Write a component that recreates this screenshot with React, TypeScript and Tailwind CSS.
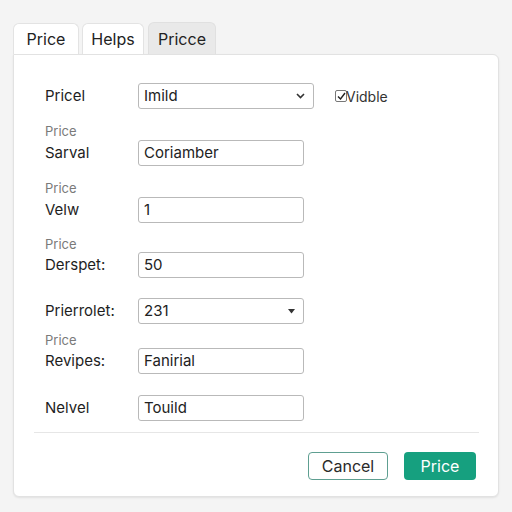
import React from "react";

const font = { fontFamily: "Inter, 'Noto Sans', 'Liberation Sans', sans-serif" };

function Caption({ children }: { children: React.ReactNode }) {
  return <div className="h-[16px] text-[13px] leading-[16px] text-[#7a7a7a] pl-[31px]">{children}</div>;
}

function Field({ label, value, w = 166, caret }: { label: string; value: string; w?: number; caret?: "chev" | "tri" }) {
  return (
    <div className="flex items-center pl-[31px] h-[26px]">
      <div className="w-[93px] text-[15px] text-[#1e1e1e]">{label}</div>
      <div
        className="h-[26px] border border-[#b9b9b9] rounded-[3px] bg-white flex items-center justify-between pl-[5px] pr-[8px] text-[15px] text-[#222]"
        style={{ width: w }}
      >
        <span>{value}</span>
        {caret === "chev" && (
          <svg width="9" height="6" viewBox="0 0 9 6">
            <path d="M1 1 L4.5 4.5 L8 1" fill="none" stroke="#333" strokeWidth="1.6" />
          </svg>
        )}
        {caret === "tri" && (
          <svg width="7" height="5" viewBox="0 0 7 5">
            <path d="M0 0 L7 0 L3.5 4.5 Z" fill="#333" />
          </svg>
        )}
      </div>
    </div>
  );
}

export default function App() {
  return (
    <div className="w-[512px] h-[512px] bg-[#f4f4f4] pt-[23px] pl-[13px]" style={font}>
      <div className="flex items-end h-[31px]">
        <div className="w-[66px] h-[31px] bg-white border border-b-0 border-[#e3e3e3] rounded-t-[6px] flex items-center justify-center text-[16px] text-[#222]">
          Price
        </div>
        <div className="ml-[3px] w-[62px] h-[31px] bg-white border border-b-0 border-[#e3e3e3] rounded-t-[6px] flex items-center justify-center text-[16px] text-[#222]">
          Helps
        </div>
        <div className="ml-[4px] w-[68px] h-[32px] bg-[#e9e9e9] border border-b-0 border-[#e0e0e0] rounded-t-[6px] flex items-center justify-center text-[16px] text-[#222]">
          Pricce
        </div>
      </div>
      <div className="w-[486px] h-[443px] bg-white border border-[#e2e2e2] rounded-b-[6px] rounded-tr-[6px] shadow-[0_1px_2px_rgba(0,0,0,0.08)] flex flex-col pt-[28px]">
        <div className="flex items-center">
          <Field label="Pricel" value="Imild" w={176} caret="chev" />
          <div className="ml-[21px] flex items-center text-[14px] text-[#333]">
            <div className="w-[12px] h-[12px] border border-[#777] rounded-[2px] flex items-center justify-center">
              <svg width="9" height="8" viewBox="0 0 9 8">
                <path d="M1 4.5 L3.5 7 L8 1" fill="none" stroke="#222" strokeWidth="1.4" />
              </svg>
            </div>
            <span className="-ml-[1px]">Vidble</span>
          </div>
        </div>
        <div className="mt-[14px]"><Caption>Price</Caption></div>
        <div className="mt-[1px]"><Field label="Sarval" value="Coriamber" /></div>
        <div className="mt-[14px]"><Caption>Price</Caption></div>
        <div className="mt-[1px]"><Field label="Velw" value="1" /></div>
        <div className="mt-[13px]"><Caption>Price</Caption></div>
        <div className="mt-[0px]"><Field label="Derspet:" value="50" /></div>
        <div className="mt-[20px]"><Field label="Prierrolet:" value="231" caret="tri" /></div>
        <div className="mt-[8px]"><Caption>Price</Caption></div>
        <div className="mt-[0px]"><Field label="Revipes:" value="Fanirial" /></div>
        <div className="mt-[21px]"><Field label="Nelvel" value="Touild" /></div>
        <div className="mt-[11px] ml-[20px] mr-[19px] h-px bg-[#e6e6e6]" />
        <div className="mt-[19px] flex justify-end pr-[22px] gap-[16px]">
          <button className="w-[80px] h-[28px] border border-[#5e9f91] rounded-[4px] bg-white text-[16px] text-[#2a2a2a]">
            Cancel
          </button>
          <button className="w-[72px] h-[28px] rounded-[4px] bg-[#16a07f] text-[16px] text-white">
            Price
          </button>
        </div>
      </div>
    </div>
  );
}
